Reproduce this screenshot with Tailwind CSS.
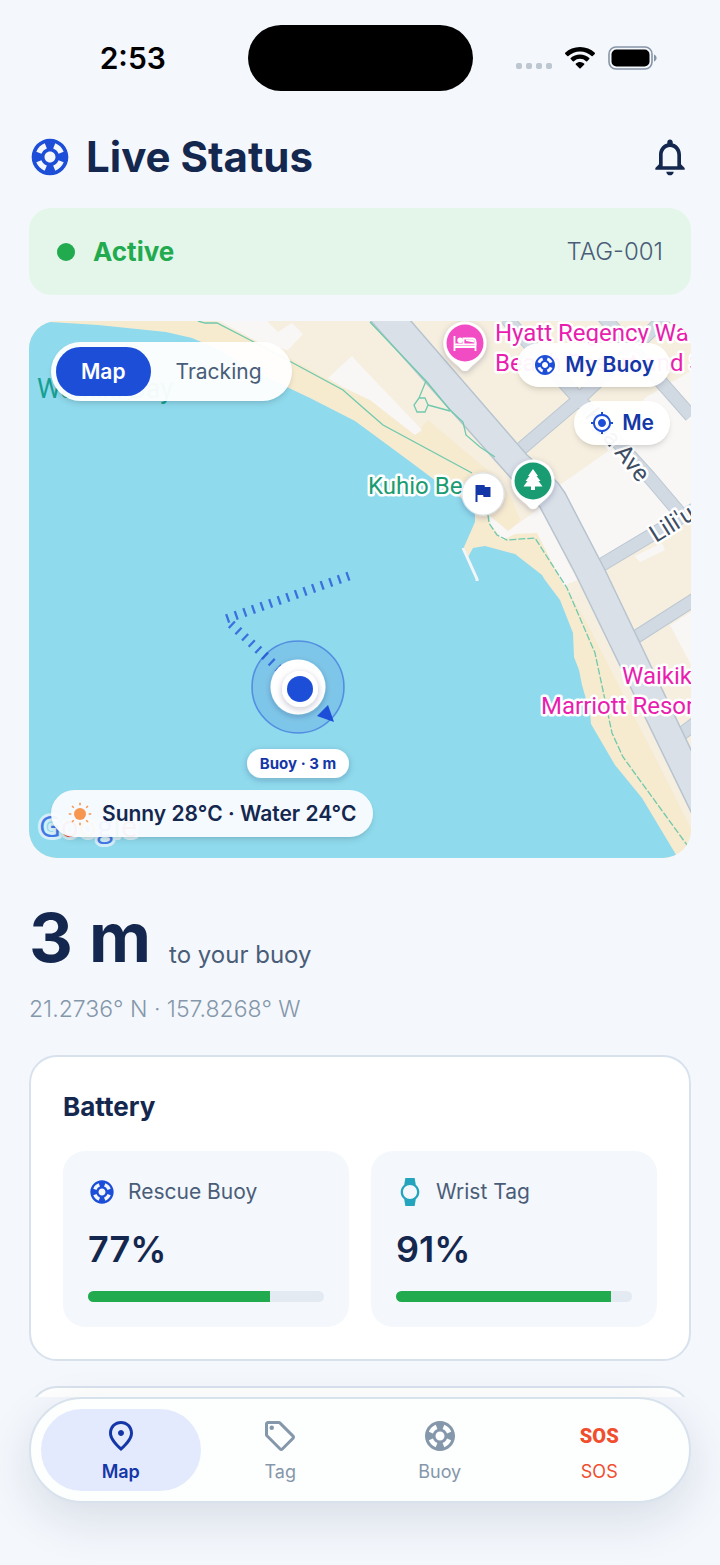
<!DOCTYPE html>
<html lang="en">
<head>
  <meta charset="UTF-8" />
  <meta name="viewport" content="width=device-width, initial-scale=1.0" />
  <title>Live Status</title>
  <script src="https://cdn.jsdelivr.net/npm/@tailwindcss/browser@4"></script>
</head>
<body class="flex min-h-screen flex-col bg-[#f4f7fc] font-['Inter',sans-serif] text-[#14274e]">

  <!-- Shared icons -->
  <svg class="hidden" aria-hidden="true">
    <symbol id="icon-buoy" viewBox="0 0 24 24">
      <path d="M12 2C6.48 2 2 6.48 2 12s4.48 10 10 10 10-4.48 10-10S17.52 2 12 2zm7.46 7.12-2.78 1.15c-.51-1.36-1.58-2.44-2.95-2.94l1.15-2.78c2.1.8 3.77 2.47 4.58 4.57zM12 15c-1.66 0-3-1.34-3-3s1.34-3 3-3 3 1.34 3 3-1.34 3-3 3zM9.13 4.54l1.17 2.78c-1.38.5-2.47 1.59-2.98 2.97L4.54 9.13c.81-2.11 2.48-3.78 4.59-4.59zM4.54 14.87l2.78-1.15c.51 1.38 1.59 2.46 2.97 2.96l-1.17 2.78c-2.1-.81-3.77-2.48-4.58-4.59zm10.34 4.59-1.15-2.78c1.37-.51 2.45-1.59 2.95-2.97l2.78 1.17c-.81 2.1-2.48 3.77-4.58 4.58z" />
    </symbol>
  </svg>

  <!-- Status Bar -->
  <div class="grid grid-cols-[1fr_auto_1fr] items-center pt-[25px]">
    <span class="pl-[18px] text-center text-[30px] leading-8 font-semibold text-black">2:53</span>
    <div class="h-[66px] w-[225px] rounded-full bg-black"></div>
    <div class="flex items-center gap-3 pl-[43px]">
      <div class="flex gap-1 pt-4">
        <span class="size-[6px] rounded-xs bg-[#bcc7d0]"></span>
        <span class="size-[6px] rounded-xs bg-[#bcc7d0]"></span>
        <span class="size-[6px] rounded-xs bg-[#bcc7d0]"></span>
        <span class="size-[6px] rounded-xs bg-[#bcc7d0]"></span>
      </div>
      <svg class="h-6 w-8" viewBox="0 0 32 24" fill="black">
        <path d="M16 1C10.200 1 5 3.200 1.200 6.800a.8.8 0 0 0 0 1.100l2.100 2.100a.8.8 0 0 0 1.100 0C7.400 7.100 11.500 5.400 16 5.400s8.600 1.700 11.600 4.600a.8.8 0 0 0 1.100 0l2.100-2.100a.8.8 0 0 0 0-1.100C27 3.200 21.800 1 16 1z" />
        <path d="M16 8.400c-3.600 0-6.900 1.400-9.300 3.600a.8.8 0 0 0 0 1.100l2.100 2.100a.8.8 0 0 0 1.100 0A9 9 0 0 1 16 12.800a9 9 0 0 1 6.100 2.400.8.8 0 0 0 1.100 0l2.100-2.100a.8.8 0 0 0 0-1.100A13.600 13.600 0 0 0 16 8.400z" />
        <path d="M16 16c-1.600 0-3 .6-4.100 1.500a.8.8 0 0 0 0 1.200l3.500 3.500a.8.8 0 0 0 1.200 0l3.500-3.500a.8.8 0 0 0 0-1.200A6.200 6.200 0 0 0 16 16z" />
      </svg>
      <svg class="h-6 w-[50px]" viewBox="0 0 50 24">
        <rect x="1" y="1" width="43" height="22" rx="7" fill="none" stroke="#8595a6" stroke-width="1.600" />
        <rect x="3.500" y="3.500" width="38" height="17" rx="5" fill="black" />
        <path d="M46 8.500c1.600.6 2.600 2 2.600 3.500s-1 2.900-2.600 3.500z" fill="#8595a6" />
      </svg>
    </div>
  </div>

  <!-- Header -->
  <header class="flex items-center justify-between px-7 pt-10">
    <div class="flex items-center gap-[14px]">
      <svg class="size-[44px] fill-[#1d4ed8]"><use href="#icon-buoy" /></svg>
      <h1 class="text-[42px] leading-[52px] font-bold">Live Status</h1>
    </div>
    <button type="button" aria-label="Notifications">
      <svg class="size-[44px] fill-[#14274e]" viewBox="0 0 24 24">
        <path d="M12 22c1.100 0 2-.9 2-2h-4c0 1.100.9 2 2 2zm6-6v-5c0-3.070-1.630-5.640-4.500-6.320V4c0-.83-.67-1.500-1.500-1.500s-1.500.67-1.500 1.500v.68C7.640 5.360 6 7.920 6 11v5l-2 2v1h16v-1l-2-2zm-2 1H8v-6c0-2.480 1.510-4.500 4-4.500s4 2.020 4 4.500v6z" />
      </svg>
    </button>
  </header>

  <main class="flex flex-col px-[29px] pt-[25px]">

    <!-- Tag Status -->
    <section class="flex h-[87px] items-center justify-between rounded-[22px] bg-[#e4f6ea] px-7">
      <div class="flex items-center gap-[18px]">
        <span class="size-[18px] rounded-full bg-[#22aa4f]"></span>
        <span class="text-[26px] font-bold text-[#22aa4f]">Active</span>
      </div>
      <span class="text-2xl font-light text-[#4a5d78]">TAG-001</span>
    </section>

    <!-- Map -->
    <section class="relative mt-[26px] aspect-[662/537] overflow-hidden rounded-[28px]">
      <svg class="size-full font-['Roboto',sans-serif]" viewBox="29 321 662 537" preserveAspectRatio="xMidYMid slice">
        <defs>
          <filter id="shadow" x="-50%" y="-50%" width="200%" height="200%">
            <feDropShadow dx="0" dy="2" stdDeviation="3" flood-color="#14274e" flood-opacity="0.25" />
          </filter>
        </defs>
        <!-- Land -->
        <rect x="29" y="321" width="662" height="537" fill="#f6efdf" />
        <path d="M29 321H215L250 338 293 360 343 388 370 400 415 435 428 420 473 458 500 480 512 500 520 520 508 532 537 533 563 583 587 623 691 828V858H29z" fill="#f6eacf" />
        <g fill="#f8f7f6">
          <path d="M220 321H267L278 332 292 323 303 334 288 350 262 344z" />
          <path d="M352 356 328 378 343 387 370 400 415 435 422 430 360 365z" />
          <path d="M557 487 607 452 645 398 691 371V520L650 540 600 561z" />
          <path d="M490 516 508 531 540 508 577 580 564 586 537 533 515 534 503 540 490 524z" />
          <path d="M670 625 691 612V665z" />
          <path d="M635 556 662 543 665 550 640 562z" />
        </g>
        <!-- Water -->
        <path d="M29 323 50 322 98 325 166 332 192 338 220 350 253 370 293 390 310 398 355 421 370 432 412 463 432 478 460 497 475 513V522L464 547 468 557 473 548 485 546 515 554 542 575 545 580 560 600 573 633 574 657 579 670 582 685 590 713 591 724 615 765 642 798 678 858H29z" fill="#8fdaed" />
        <path d="M463 548 477 579 477 581" fill="none" stroke="#f3f5f7" stroke-width="3" />
        <!-- Streets -->
        <g fill="none" stroke-linejoin="round">
          <g stroke="#bcc8d2" stroke-width="14">
            <path d="M506 318 577 397 650 478 684 518M522 448 577 401 668 315M602 315 691 416M598 567 700 506M628 642 700 596M676 738 700 720" />
          </g>
          <g stroke="#d1d9e2" stroke-width="12">
            <path d="M506 318 577 397 650 478 684 518M522 448 577 401 668 315M602 315 691 416M598 567 700 506M628 642 700 596M676 738 700 720" />
          </g>
        </g>
        <path d="M370 320 510 477 540 507 575 573 695 820V758L605 570 565 493 558 483 527 455 410 320z" fill="#d9e0e8" stroke="#b7c4cf" stroke-width="1.500" />
        <!-- Footpaths -->
        <g fill="none" stroke="#6fc9ae" stroke-width="1.300">
          <path d="M198 321 205 323H217L250 340 293 363 343 390 360 405 383 425 472 473" />
          <path d="M370 322 427 382 450 410 463 422 466 435 480 447 495 457M426 381 419 398H425L428 405 425 412H417L414 405 419 398M428 405 450 411" />
          <path d="M488 515 489 523 497 535 507 540 535 538 567 588 595 653 612 733 623 757 687 845" stroke-dasharray="7 2" />
        </g>
        <!-- Place labels -->
        <text x="37" y="398" font-size="27" fill="#17a092">Waikiki Bay</text>
        <g font-size="24" stroke="#ffffff" stroke-width="5" stroke-linejoin="round" paint-order="stroke">
          <text x="368" y="494" fill="#1a9c72">Kuhio Be</text>
          <g fill="#e81fae">
            <text x="495" y="341">Hyatt Regency Waikiki</text>
            <text x="495" y="371">Beach Resort and Spa</text>
            <text x="622" y="684">Waikiki</text>
            <text x="541" y="714">Marriott Resort</text>
          </g>
          <g fill="#3d4d63">
            <text transform="translate(584 416) rotate(51)">Koa Ave</text>
            <text transform="translate(656 543) rotate(-32)">Lili'uokalani Ave</text>
          </g>
        </g>
        <!-- Hotel pin -->
        <g transform="translate(465 343)">
          <path d="M0 28C-3 28-4 26-7 23-14 17-21.500 12-21.500 0A21.500 21.500 0 0 1 21.500 0C21.500 12 14 17 7 23 4 26 3 28 0 28z" fill="white" filter="url(#shadow)" />
          <circle r="18.500" fill="#f24cc4" />
          <path d="M-10.500-7V8M-10.500 4H10.500M10.500 8V-1" fill="none" stroke="white" stroke-width="1.800" />
          <path d="M-1.500 1V-4.500H7.500Q10.500-4.500 10.500-1.500V1.500H-10.500" fill="none" stroke="white" stroke-width="1.800" />
          <path d="M1-3.500H7Q9.500-3.500 9.500-1V-.5L1-2z" fill="white" />
          <circle cx="-4.800" cy="-2.800" r="2.800" fill="white" />
        </g>
        <!-- Park pin -->
        <g transform="translate(533 481)">
          <path d="M0 28C-3 28-4 26-7 23-14 17-21.500 12-21.500 0A21.500 21.500 0 0 1 21.500 0C21.500 12 14 17 7 23 4 26 3 28 0 28z" fill="white" filter="url(#shadow)" />
          <circle r="18.500" fill="#199c72" />
          <path d="M0-12 5-5H3.500L7.500 0H5.500L9.500 5.500H2V9H-2V5.500H-9.500L-5.500 0H-7.500L-3.500-5H-5z" fill="white" />
        </g>
        <!-- Flag marker -->
        <circle cx="483" cy="494" r="21" fill="white" stroke="#dbe4ee" filter="url(#shadow)" />
        <path d="M14.400 6 14 4H5v17h2v-7h5.600l.4 2h7V6z" transform="translate(470.500 481)" fill="#1437a8" />
        <!-- Track -->
        <g fill="none" stroke="#1d4ed8" stroke-opacity="0.750" stroke-width="9" stroke-dasharray="2.300 6.800">
          <path d="M349 576 226 619" />
          <path d="M231 624 280 670" />
        </g>
        <!-- Buoy -->
        <circle cx="298" cy="687" r="46" fill="#1d4ed8" fill-opacity="0.140" stroke="#1d4ed8" stroke-opacity="0.500" stroke-width="1.600" />
        <circle cx="298" cy="687" r="27.500" fill="white" filter="url(#shadow)" />
        <circle cx="300" cy="689" r="18" fill="white" filter="url(#shadow)" />
        <circle cx="300" cy="689" r="13" fill="#1d4ed8" />
        <path d="M328 705 317 716 334 722z" fill="#1d4ed8" />
        <rect x="247" y="749" width="102" height="29" rx="14.500" fill="white" filter="url(#shadow)" />
        <text x="298" y="769" class="font-['Inter',sans-serif]" font-size="15" font-weight="700" text-anchor="middle" fill="#1437a8">Buoy · 3 m</text>
        <!-- Map provider -->
        <g class="font-['Open_Sans',sans-serif]" font-size="30" font-weight="500" stroke="#d4eff7" stroke-width="6" stroke-linejoin="round" paint-order="stroke">
          <text x="39" y="837"><tspan fill="#4078e8">G</tspan><tspan fill="#ea4335">o</tspan><tspan fill="#fbbc05">o</tspan><tspan fill="#4078e8">g</tspan><tspan fill="#34a853">l</tspan><tspan fill="#ea4335">e</tspan></text>
        </g>
      </svg>

      <div class="absolute top-[21px] left-[22px] flex rounded-full bg-white/95 p-[5px] text-[21px] shadow-md">
        <button type="button" class="h-[49px] rounded-full bg-[#1d4ed8] px-[25px] font-semibold text-white" aria-pressed="true">Map</button>
        <button type="button" class="h-[49px] rounded-full px-[25px] text-[#4a5d78]" aria-pressed="false">Tracking</button>
      </div>

      <div class="absolute top-[22px] right-[21px] flex flex-col items-end gap-[14px] text-[21px]">
        <button type="button" class="flex h-11 items-center gap-2 rounded-full bg-white/95 px-4 font-semibold text-[#1437a8] shadow-md">
          <svg class="size-6 fill-[#1d4ed8]"><use href="#icon-buoy" /></svg>
          My Buoy
        </button>
        <button type="button" class="flex h-11 items-center gap-2 rounded-full bg-white/95 px-4 font-semibold text-[#1437a8] shadow-md">
          <svg class="size-6 fill-[#1d4ed8]" viewBox="0 0 24 24">
            <path d="M12 8c-2.210 0-4 1.790-4 4s1.790 4 4 4 4-1.790 4-4-1.790-4-4-4zm8.940 3c-.46-4.170-3.770-7.480-7.940-7.940V1h-2v2.060C6.830 3.520 3.520 6.830 3.060 11H1v2h2.060c.46 4.170 3.770 7.480 7.940 7.940V23h2v-2.060c4.170-.46 7.480-3.770 7.940-7.940H23v-2h-2.060zM12 19c-3.870 0-7-3.130-7-7s3.130-7 7-7 7 3.130 7 7-3.130 7-7 7z" />
          </svg>
          Me
        </button>
      </div>

      <div class="absolute bottom-[21px] left-[22px] flex h-[47px] items-center gap-[10px] rounded-full bg-[#fafcff]/95 px-[17px] text-[21px] font-semibold shadow-md">
        <svg class="size-6" viewBox="0 0 24 24" fill="#f7964f" stroke="#f7964f" stroke-width="1.600">
          <circle cx="12" cy="12" r="6" stroke="none" />
          <path d="M12 .8V3.300M12 20.700V23.200M.8 12H3.300M20.700 12H23.200M4 4 5.800 5.800M18.200 18.200 20 20M4 20 5.800 18.200M18.200 5.800 20 4" />
        </svg>
        Sunny 28°C · Water 24°C
      </div>
    </section>

    <!-- Distance -->
    <section class="pt-[45px]">
      <div class="flex items-end gap-[18px]">
        <p class="text-[68px] leading-[68px] font-bold">3 m</p>
        <p class="text-2xl leading-8 text-[#4a5d78]">to your buoy</p>
      </div>
      <p class="pt-[22px] text-[23px] leading-8 font-light text-[#8597aa]">21.2736° N · 157.8268° W</p>
    </section>

    <!-- Battery -->
    <section class="mt-[30px] rounded-[28px] border-2 border-[#d8e2ed] bg-white p-8">
      <h2 class="text-[26px] leading-9 font-bold">Battery</h2>
      <div class="grid grid-cols-2 gap-[22px] pt-[26px]">
        <div class="rounded-[22px] bg-[#f4f7fc] p-[25px]">
          <div class="flex h-8 items-center gap-3">
            <svg class="size-7 fill-[#1d4ed8]"><use href="#icon-buoy" /></svg>
            <h3 id="buoy-battery" class="text-[21px] text-[#4a5d78]">Rescue Buoy</h3>
          </div>
          <p class="pt-4 text-4xl leading-[50px] font-semibold">77%</p>
          <div class="mt-[17px] h-[11px] overflow-hidden rounded-full bg-[#e3eaf2]" role="progressbar" aria-labelledby="buoy-battery" aria-valuenow="77" aria-valuemin="0" aria-valuemax="100">
            <div class="h-full bg-[#22aa4f]" style="width: 77%"></div>
          </div>
        </div>
        <div class="rounded-[22px] bg-[#f4f7fc] p-[25px]">
          <div class="flex h-8 items-center gap-3">
            <svg class="size-7 fill-[#25a5bd]" viewBox="0 0 24 24">
              <path d="M20 12c0-2.540-1.190-4.810-3.040-6.270L16 0H8l-.95 5.730C5.190 7.190 4 9.450 4 12s1.190 4.810 3.050 6.270L8 24h8l.96-5.730C18.810 16.810 20 14.540 20 12zM6 12c0-3.310 2.690-6 6-6s6 2.690 6 6-2.690 6-6 6-6-2.690-6-6z" />
            </svg>
            <h3 id="tag-battery" class="text-[21px] text-[#4a5d78]">Wrist Tag</h3>
          </div>
          <p class="pt-4 text-4xl leading-[50px] font-semibold">91%</p>
          <div class="mt-[17px] h-[11px] overflow-hidden rounded-full bg-[#e3eaf2]" role="progressbar" aria-labelledby="tag-battery" aria-valuenow="91" aria-valuemin="0" aria-valuemax="100">
            <div class="h-full bg-[#22aa4f]" style="width: 91%"></div>
          </div>
        </div>
      </div>
    </section>

    <!-- Top of the next card, cut off by the tab bar -->
    <div class="mt-[25px] h-[11px] overflow-hidden">
      <div class="h-20 rounded-[28px] border-2 border-[#d8e2ed] bg-white"></div>
    </div>
  </main>

  <!-- Tab Bar -->
  <nav class="relative mx-[29px] mb-[61px] grid grid-cols-4 rounded-full border-2 border-[#d8e2ed] bg-[#fdfefe] p-[10px] text-lg leading-6 text-[#8597aa] shadow-[0_16px_48px_rgba(20,39,78,0.12)]">
    <a href="#map" class="flex flex-col items-center rounded-full bg-[#e4eafd] pt-[9px] pb-[7px] font-semibold text-[#1437a8]" aria-current="page">
      <svg class="size-9" viewBox="0 0 24 24" fill="currentColor">
        <path d="M12 12c-1.100 0-2-.9-2-2s.9-2 2-2 2 .9 2 2-.9 2-2 2zm6-1.800C18 6.570 15.350 4 12 4s-6 2.570-6 6.200c0 2.340 1.950 5.440 6 9.140 4.050-3.700 6-6.800 6-9.140zM12 2c4.200 0 8 3.220 8 8.200 0 3.320-2.670 7.250-8 11.800-5.330-4.550-8-8.480-8-11.800C4 5.220 7.800 2 12 2z" />
      </svg>
      <span class="pt-[6px]">Map</span>
    </a>
    <a href="#tag" class="flex flex-col items-center rounded-full pt-[9px] pb-[7px]">
      <svg class="size-9" viewBox="0 0 24 24" fill="currentColor">
        <path d="M21.410 11.410l-8.830-8.830c-.37-.37-.88-.58-1.410-.58H4c-1.100 0-2 .9-2 2v7.170c0 .53.21 1.040.59 1.410l8.830 8.830c.78.78 2.050.78 2.830 0l7.170-7.170c.78-.78.78-2.040-.01-2.830zM12.830 20L4 11.170V4h7.170L20 12.830 12.830 20z" />
        <circle cx="6.500" cy="6.500" r="1.500" />
      </svg>
      <span class="pt-[6px]">Tag</span>
    </a>
    <a href="#buoy" class="flex flex-col items-center rounded-full pt-[9px] pb-[7px]">
      <svg class="size-9 fill-current"><use href="#icon-buoy" /></svg>
      <span class="pt-[6px]">Buoy</span>
    </a>
    <a href="#sos" class="flex flex-col items-center rounded-full pt-[9px] pb-[7px] text-[#f04e2e]">
      <span class="flex h-9 items-center font-['Roboto',sans-serif] text-xl font-black" aria-hidden="true">SOS</span>
      <span class="pt-[6px]">SOS</span>
    </a>
  </nav>

</body>
</html>
